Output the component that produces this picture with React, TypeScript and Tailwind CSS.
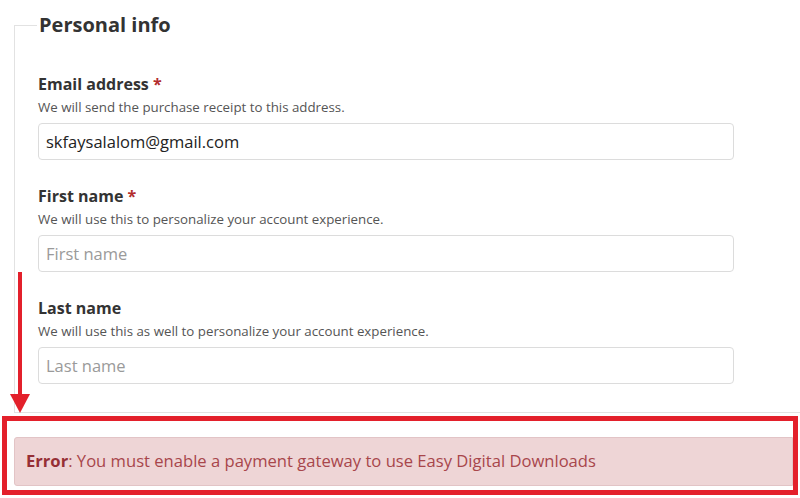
const Field = ({
  label,
  help,
  required,
  value,
  placeholder,
}: {
  label: string;
  help: string;
  required?: boolean;
  value?: string;
  placeholder?: string;
}) => (
  <div>
    <label className="block text-[16px] font-bold leading-[22px] text-[#333]">
      {label}
      {required && <span className="text-[#b32d2e]"> *</span>}
    </label>
    <p className="mt-[3px] text-[13.3px] leading-[18px] text-[#555]">{help}</p>
    <input
      className="mt-[7px] block h-[37px] w-[696px] rounded-[4px] border border-[#dcdcdc] bg-white px-[7px] text-[16.5px] text-[#222] placeholder:text-[#9a9a9a] outline-none"
      defaultValue={value}
      placeholder={placeholder}
    />
  </div>
);

const App = () => {
  return (
    <div className="relative h-[498px] w-[800px] overflow-hidden bg-white font-['Open_Sans',sans-serif]">
      <div className="flow-root ml-[14px] mt-[25px] h-[388px] border-l border-b border-[#e2e2e2]">
        <div className="-mt-[13px] flex items-center">
          <div className="h-px w-[22px] bg-[#e2e2e2]" />
          <h2 className="pl-[2px] text-[20px] font-bold leading-[26px] text-[#333]">Personal info</h2>
        </div>
        <div className="ml-[23px] mt-[35px] flex flex-col gap-[25px]">
          <Field
            label="Email address"
            required
            help="We will send the purchase receipt to this address."
            value="skfaysalalom@gmail.com"
          />
          <Field
            label="First name"
            required
            help="We will use this to personalize your account experience."
            placeholder="First name"
          />
          <Field
            label="Last name"
            help="We will use this as well to personalize your account experience."
            placeholder="Last name"
          />
        </div>
      </div>

      <div className="mx-[2px] mt-[3px] h-[79px] border-[5px] border-[#e3202b] pl-[7px] pt-[16px]">
        <div className="flex h-[49px] items-center rounded-l-[3px] border border-[#e2c4c6] bg-[#eed5d6] px-[11px] text-[16.6px] text-[#a8464b]">
          <p>
            <strong className="text-[#962f35]">Error</strong>: You must enable a payment gateway to use Easy Digital
            Downloads
          </p>
        </div>
      </div>

      {/* annotation arrow */}
      <div className="absolute left-[10px] top-[272px] flex w-[20px] flex-col items-center">
        <div className="h-[122px] w-[4px] bg-[#e3202b]" />
        <div className="h-0 w-0 border-x-[10px] border-t-[19px] border-x-transparent border-t-[#e3202b]" />
      </div>
    </div>
  );
};

export default App;
